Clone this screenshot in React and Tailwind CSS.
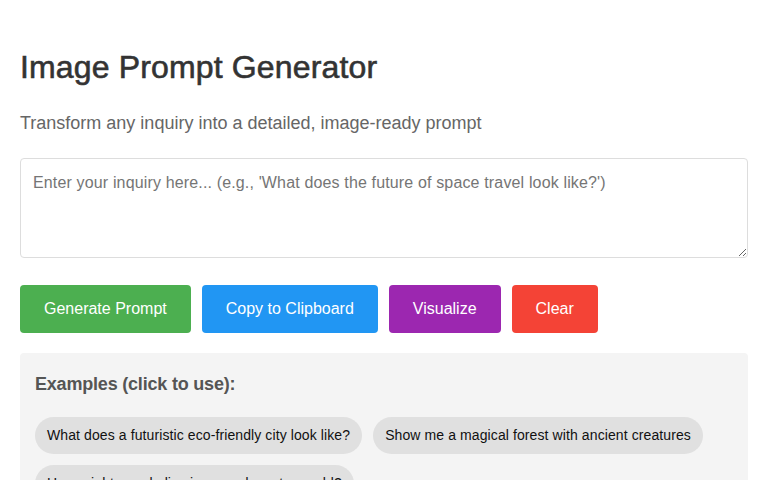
import React from "react";

const examples = [
  "What does a futuristic eco-friendly city look like?",
  "Show me a magical forest with ancient creatures",
  "How might people live in an underwater world?",
];

const buttons = [
  { label: "Generate Prompt", cls: "bg-[#4caf50]" },
  { label: "Copy to Clipboard", cls: "bg-[#2196f3]" },
  { label: "Visualize", cls: "bg-[#9c27b0]" },
  { label: "Clear", cls: "bg-[#f44336]" },
];

export default function App() {
  return (
    <div className="min-h-screen bg-white font-['Liberation_Sans',Arial,sans-serif]">
      <div className="px-5 pt-[49px]">
        <h1 className="text-[32px] font-normal leading-[37px] tracking-[0.15px] text-[#333] [-webkit-text-stroke:0.6px_#333]">
          Image Prompt Generator
        </h1>
        <p className="mt-[27px] text-[18px] leading-[21px] text-[#666]">
          Transform any inquiry into a detailed, image-ready prompt
        </p>

        <textarea
          className="mt-6 block h-[100px] w-full resize-y rounded border border-[#ddd] p-3 text-[16px] tracking-[0.15px] text-[#333] placeholder:text-[#757575] outline-none"
          placeholder="Enter your inquiry here... (e.g., 'What does the future of space travel look like?')"
        />

        {/* Actions */}
        <div className="mt-[27px] flex gap-[11px]">
          {buttons.map((b) => (
            <button
              key={b.label}
              className={`${b.cls} h-12 rounded px-6 text-[16px] text-white`}
            >
              {b.label}
            </button>
          ))}
        </div>

        {/* Examples */}
        <div className="mt-5 rounded bg-[#f4f4f4] px-[15px] pt-[21px] pb-4">
          <h3 className="text-[18px] font-bold leading-[21px] tracking-[-0.2px] text-[#555]">Examples (click to use):</h3>
          <div className="mt-[22px] flex flex-wrap gap-[11px]">
            {examples.map((e) => (
              <span
                key={e}
                className="h-[37px] rounded-full bg-[#e0e0e0] px-3 text-[14px] leading-[37px] tracking-[0.1px] text-[#111]"
              >
                {e}
              </span>
            ))}
          </div>
        </div>
      </div>
    </div>
  );
}
